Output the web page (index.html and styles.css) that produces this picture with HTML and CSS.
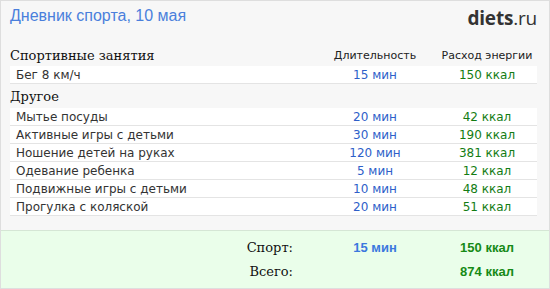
FILE: index.html
```html
<!DOCTYPE html>
<html lang="ru">
<head>
<meta charset="utf-8">
<link rel="stylesheet" href="styles.css">
</head>
<body>
<div class="card">
  <div class="head">
    <div class="title">Дневник спорта, 10 мая</div>
    <div class="logo"><b>diets</b>.ru</div>
  </div>
  <div class="table">
    <div class="hrow">
      <div class="c-name section">Спортивные занятия</div>
      <div class="c-dur">Длительность</div>
      <div class="c-en">Расход энергии</div>
    </div>
    <div class="row"><div class="c-name">Бег 8 км/ч</div><div class="c-dur">15 мин</div><div class="c-en">150 ккал</div></div>
    <div class="hrow other">
      <div class="c-name section">Другое</div>
    </div>
    <div class="row"><div class="c-name">Мытье посуды</div><div class="c-dur">20 мин</div><div class="c-en">42 ккал</div></div>
    <div class="row"><div class="c-name">Активные игры с детьми</div><div class="c-dur">30 мин</div><div class="c-en">190 ккал</div></div>
    <div class="row"><div class="c-name">Ношение детей на руках</div><div class="c-dur">120 мин</div><div class="c-en">381 ккал</div></div>
    <div class="row"><div class="c-name">Одевание ребенка</div><div class="c-dur">5 мин</div><div class="c-en">12 ккал</div></div>
    <div class="row"><div class="c-name">Подвижные игры с детьми</div><div class="c-dur">10 мин</div><div class="c-en">48 ккал</div></div>
    <div class="row"><div class="c-name">Прогулка с коляской</div><div class="c-dur">20 мин</div><div class="c-en">51 ккал</div></div>
  </div>
  <div class="foot">
    <div class="frow"><div class="c-name label">Спорт:</div><div class="c-dur">15 мин</div><div class="c-en">150 ккал</div></div>
    <div class="frow"><div class="c-name label">Всего:</div><div class="c-dur"></div><div class="c-en">874 ккал</div></div>
  </div>
</div>
</body>
</html>
```
FILE: styles.css
```css
html, body { margin: 0; padding: 0; }
body { width: 550px; height: 289px; overflow: hidden; background: #fff; }
.card {
  box-sizing: border-box;
  width: 550px; height: 289px;
  border: 1px solid #dedede;
  background: #f7f7f7;
  display: flex; flex-direction: column;
}
.head {
  display: flex; justify-content: space-between; align-items: flex-start;
  padding: 5px 12px 0 9px;
  height: 41px; box-sizing: border-box;
}
.title {
  font-family: "Liberation Sans", Arial, sans-serif;
  font-size: 16px; color: #4a7fdc; line-height: 20px;
}
.logo {
  font-family: "Open Sans", "Noto Sans", sans-serif;
  font-size: 19px; color: #333; line-height: 22px; margin-top: 1px;
  letter-spacing: -0.2px;
}
.logo b { font-weight: 700; }
.table { padding: 0 12px 0 9px; flex: 1; }
.hrow, .row, .frow { display: flex; align-items: center; }
.hrow { height: 24px; padding-top: 2px; box-sizing: border-box; font-family: "DejaVu Sans", Verdana, sans-serif; font-size: 11px; color: #222; }
.hrow.other { height: 24px; padding-top: 0; }
.section { font-family: "DejaVu Serif", Georgia, serif; font-size: 13px; color: #111; }
.row {
  height: 17px; background: #fff; border-bottom: 1px solid #e4e4e4;
  font-family: "DejaVu Sans", Verdana, sans-serif; font-size: 12px; color: #333;
}
.row .c-name { padding-left: 6px; }
.c-name { flex: 1; white-space: nowrap; }
.c-dur { width: 100px; margin-right: 12px; text-align: center; white-space: nowrap; }
.c-en { width: 100px; text-align: center; white-space: nowrap; }
.row .c-dur { color: #2e5fc9; }
.row .c-en { color: #137c13; }
.foot {
  height: 58px; box-sizing: border-box;
  background: #eafeea; border-top: 1px solid #d5e6d5;
  padding: 4px 12px 0 9px;
}
.frow { height: 24px; }
.label { text-align: right; padding-right: 32px; font-family: "DejaVu Serif", Georgia, serif; font-size: 13px; color: #111; }
.frow .c-dur, .frow .c-en { font-family: "Liberation Sans", Arial, sans-serif; font-weight: 700; font-size: 13px; }
.frow .c-dur { color: #3a78de; }
.frow .c-en { color: #168a16; }
```
